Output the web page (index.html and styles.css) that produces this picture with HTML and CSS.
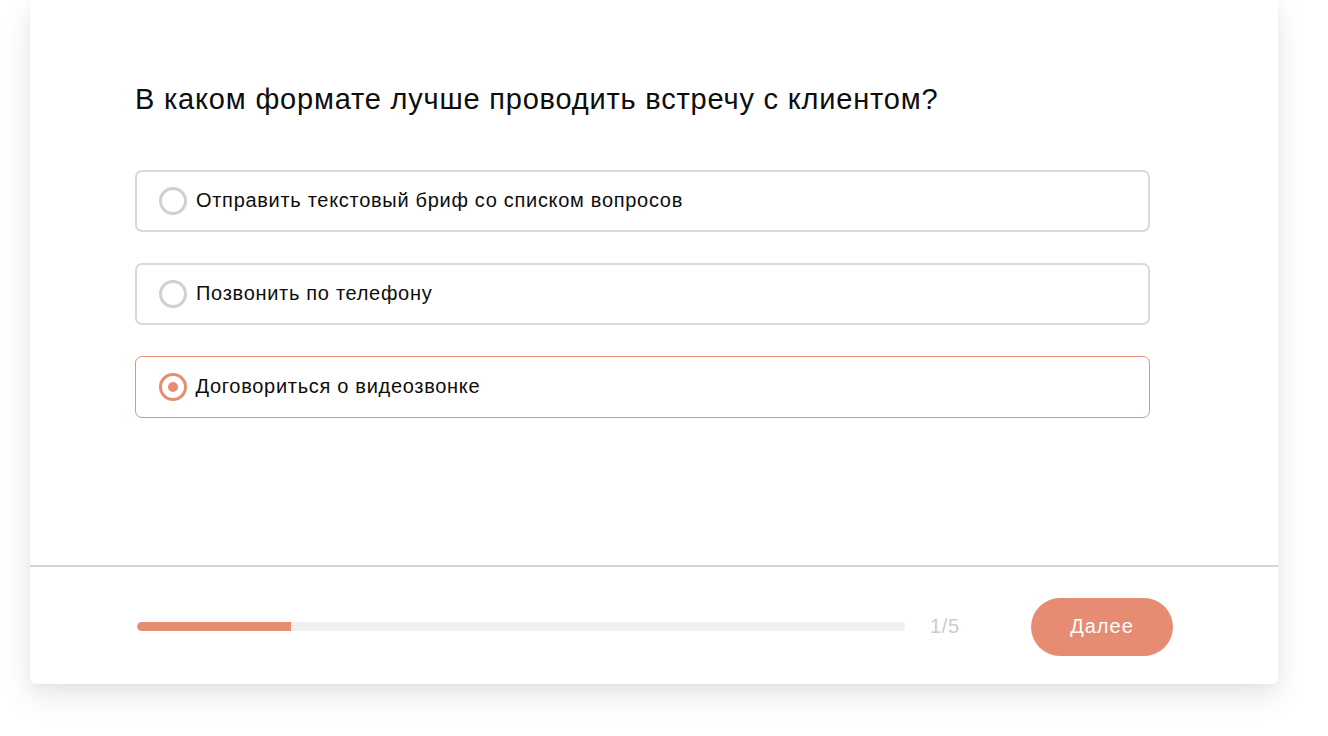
FILE: index.html
```html
<!DOCTYPE html>
<html lang="ru">
<head>
<meta charset="utf-8">
<title>Вопрос</title>
<link rel="stylesheet" href="styles.css">
</head>
<body>
<div class="card">
  <div class="main">
    <h1 class="title">В каком формате лучше проводить встречу с клиентом?</h1>
    <div class="options">
      <label class="option">
        <span class="radio"></span>
        <span class="label">Отправить текстовый бриф со списком вопросов</span>
      </label>
      <label class="option">
        <span class="radio"></span>
        <span class="label">Позвонить по телефону</span>
      </label>
      <label class="option option-selected">
        <span class="radio radio-selected"></span>
        <span class="label">Договориться о видеозвонке</span>
      </label>
    </div>
  </div>
  <div class="footer">
    <div class="progress"><div class="progress-fill" style="width: 20%"></div></div>
    <div class="counter">1/5</div>
    <button class="next">Далее</button>
  </div>
</div>
</body>
</html>
```
FILE: styles.css
```css
* { box-sizing: border-box; }
html, body { margin: 0; padding: 0; background: #ffffff; }
body {
  font-family: "Liberation Sans", Arial, sans-serif;
  color: #111;
  padding: 0 50px 52px 30px;
  height: 736px;
  overflow: hidden;
}
.card {
  width: 1248px;
  height: 684px;
  background: #fff;
  border-radius: 0 0 6px 6px;
  box-shadow: 0 12px 30px rgba(0, 0, 0, 0.10), 0 2px 8px rgba(0,0,0,0.04);
  display: flex;
  flex-direction: column;
}
.main {
  flex: 1;
  padding: 83px 128px 0 105px;
  border-bottom: 2px solid #d4d4d4;
}
.title {
  margin: 0;
  font-size: 29px;
  line-height: 32px;
  letter-spacing: 0.8px;
  font-weight: 400;
  color: #0d0d0d;
}
.options {
  margin-top: 55px;
  display: flex;
  flex-direction: column;
  gap: 31px;
}
.option {
  height: 62px;
  border: 2px solid #d9d9d9;
  border-radius: 7px;
  display: flex;
  align-items: center;
  padding-left: 22px;
  padding-bottom: 1px;
  gap: 9px;
  font-size: 20px;
  letter-spacing: 0.7px;
  color: #0d0d0d;
}
.option-selected {
  border: 1.5px solid #e8907a;
  padding-left: 22.5px;
}
.radio {
  width: 28px;
  height: 28px;
  border: 3px solid #d0d0d0;
  border-radius: 50%;
  flex: none;
  display: flex;
  align-items: center;
  justify-content: center;
}
.radio-selected {
  border-color: #e58c73;
}
.radio-selected::after {
  content: "";
  width: 10px;
  height: 10px;
  border-radius: 50%;
  background: #e58c73;
}
.footer {
  height: 117px;
  flex: none;
  display: flex;
  align-items: center;
  padding: 2px 105px 0 107px;
}
.progress {
  width: 768px;
  height: 9px;
  border-radius: 5px;
  background: #f0f0f0;
  overflow: hidden;
}
.progress-fill {
  height: 100%;
  background: #e58c73;
  border-radius: 5px 0 0 5px;
}
.counter {
  margin-left: 25px;
  font-size: 20px;
  letter-spacing: 0.7px;
  color: #cccccc;
}
.next {
  margin-left: auto;
  width: 142px;
  height: 58px;
  border: none;
  border-radius: 29px;
  background: #e58c73;
  color: #fff;
  font-family: "Liberation Sans", Arial, sans-serif;
  font-size: 20px;
  letter-spacing: 1px;
  cursor: pointer;
}
```
